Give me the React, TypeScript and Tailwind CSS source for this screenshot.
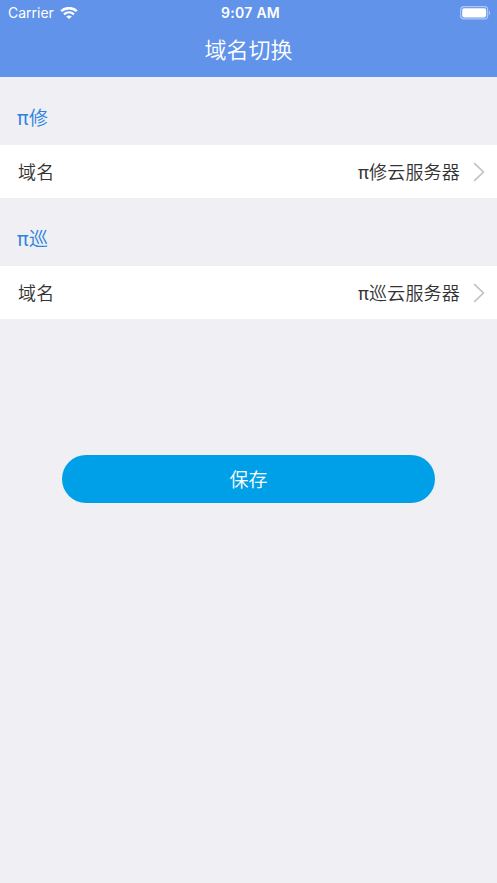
import React, { useState } from 'react'

interface DomainItem {
    id: string;
    name: string;
    server: string;
}

const domainList: DomainItem[] = [
    { id: 'repair', name: '修', server: '修云服务器' },
    { id: 'patrol', name: '巡', server: '巡云服务器' },
]

const StatusBar = () => (
    <div className="grid grid-cols-3 items-center h-[26px] pl-2 pr-[6px] text-white">
        <div className="flex items-center gap-[6px]">
            <span className="text-[14px] leading-none font-normal">Carrier</span>
            <svg width="18" height="12" viewBox="0 0 18 12" fill="none">
                <path d="M1.2 4.2C5.5 0.1 12.5 0.1 16.8 4.2" stroke="currentColor" strokeWidth="2.5" />
                <path d="M4 7.3C7 4.7 11 4.7 14 7.3" stroke="currentColor" strokeWidth="2.3" />
                <path d="M9 12L6.2 9.4C7.8 8.1 10.2 8.1 11.8 9.4Z" fill="currentColor" />
            </svg>
        </div>
        <span className="text-center text-[14px] leading-none font-semibold tracking-[0.3px] whitespace-nowrap pl-[2px]">9:07 AM</span>
        <svg className="justify-self-end" width="31" height="14" viewBox="0 0 31 14" fill="none">
            <rect x="0.7" y="0.7" width="27" height="12.2" rx="3.2" stroke="white" strokeOpacity="0.5" strokeWidth="1.2" />
            <rect x="2.2" y="2.2" width="24" height="9.2" rx="1.8" fill="white" />
            <path d="M29 4.8C30.4 5.3 30.4 8.5 29 9Z" fill="white" fillOpacity="0.5" />
        </svg>
    </div>
)

const DomainSection = ({ item }: { item: DomainItem }) => (
    <section>
        <h2 className="h-[68px] pt-[15px] pl-[17px] flex items-center text-[19px] leading-none tracking-[0.5px] font-[350] text-[#2b83e0]">
            <span className="font-normal">π</span>{item.name}
        </h2>
        <button className="w-full h-[53px] pl-[18px] pr-3 flex items-center bg-white text-[18px] leading-none text-[#333333]">
            <span className="pt-[2px] tracking-[0.3px]">域名</span>
            <span className="pt-[2px] ml-auto mr-[13px] tracking-[0.2px]"><span className="font-normal">π</span>{item.server}</span>
            <svg width="12" height="20" viewBox="0 0 12 20" fill="none">
                <path d="M1.2 1.2L10.4 10L1.2 18.8" stroke="#c3c3c7" strokeWidth="1.7" />
            </svg>
        </button>
    </section>
)

const App = () => {
    const [domains] = useState<DomainItem[]>(domainList);

    return (
        <div className="min-h-screen bg-[#efeff4] font-[Inter,'Noto_Sans_CJK_SC',sans-serif] font-[350]">
            <header className="h-[77px] bg-[#6093e9]">
                <StatusBar />
                <h1 className="h-[48px] flex items-center justify-center text-[22px] leading-none font-[350] text-white">域名切换</h1>
            </header>
            <main>
                {domains.map((item) => (
                    <DomainSection key={item.id} item={item} />
                ))}
                {/* 保存按钮 */}
                <button className="block w-[373px] h-12 mt-[136px] pt-[2px] mx-auto rounded-full bg-[#00a0e9] text-[19px] leading-none text-white">
                    保存
                </button>
            </main>
        </div>
    )
}

export default App;
